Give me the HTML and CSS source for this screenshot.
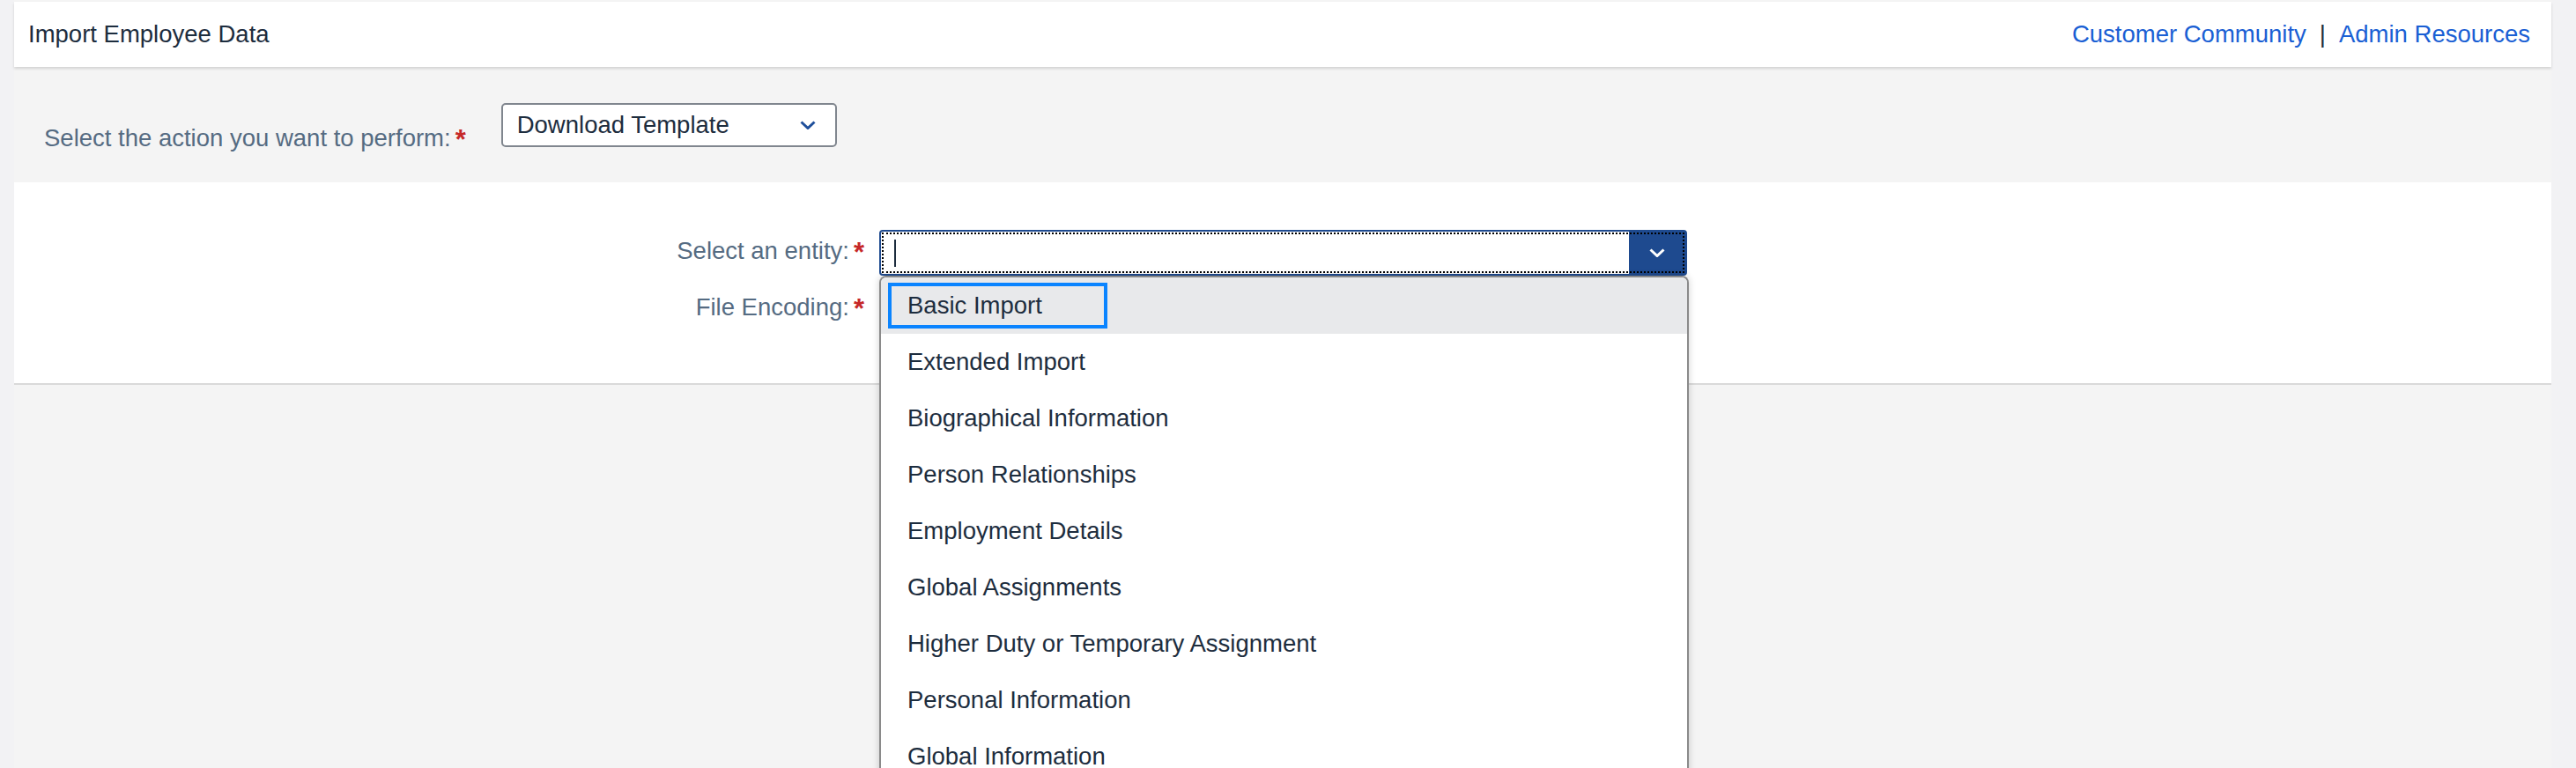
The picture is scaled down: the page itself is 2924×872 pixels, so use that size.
FILE: index.html
```html
<!DOCTYPE html>
<html lang="en">
<head>
  <meta charset="UTF-8">
  <meta name="viewport" content="width=device-width, initial-scale=1.0">
  <title>Import Employee Data</title>
  <link rel="stylesheet" href="styles.css">
</head>
<body>
  <div class="page">
    <header class="topbar">
      <h1 class="title">Import Employee Data</h1>
      <nav class="links">
        <a href="#community">Customer Community</a>
        <span class="sep">|</span>
        <a href="#resources">Admin Resources</a>
      </nav>
    </header>

    <div class="action">
      <label class="action-label">Select the action you want to perform:<span class="req">*</span></label>
      <div class="select">
        <span>Download Template</span>
        <svg class="chev" width="18" height="10" viewBox="0 0 18 10"><path d="M1.5 1.5 9 8.5 16.5 1.5" fill="none" stroke="#1f4f9b" stroke-width="3"/></svg>
      </div>
    </div>

    <section class="panel">
      <div class="form">
        <label class="flabel">Select an entity:<span class="req">*</span></label>
        <div class="combo">
          <div class="combo-input"><span class="caret"></span></div>
          <div class="combo-btn">
            <svg width="18" height="10" viewBox="0 0 18 10"><path d="M1.5 1.5 9 8.5 16.5 1.5" fill="none" stroke="#fff" stroke-width="3"/></svg>
          </div>
          <ul class="list">
            <li class="opt active"><span>Basic Import</span></li>
            <li class="opt"><span>Extended Import</span></li>
            <li class="opt"><span>Biographical Information</span></li>
            <li class="opt"><span>Person Relationships</span></li>
            <li class="opt"><span>Employment Details</span></li>
            <li class="opt"><span>Global Assignments</span></li>
            <li class="opt"><span>Higher Duty or Temporary Assignment</span></li>
            <li class="opt"><span>Personal Information</span></li>
            <li class="opt"><span>Global Information</span></li>
          </ul>
        </div>

        <label class="flabel">File Encoding:<span class="req">*</span></label>
        <div class="field"></div>
      </div>
    </section>
  </div>
</body>
</html>
```

FILE: styles.css
```css
html, body {
  margin: 0;
  height: 100%;
  overflow: hidden;
}
body {
  background: #f2f2f4;
  font-family: "Liberation Sans", Arial, sans-serif;
  font-size: 27.5px;
  color: #1d2d3e;
}
.page {
  margin-left: 16px;
  width: 2880px;
  height: 872px;
  padding-top: 2px;
  box-sizing: border-box;
  background: #f4f4f4;
}

/* top bar */
.topbar {
  position: relative;
  z-index: 1;
  display: flex;
  align-items: center;
  justify-content: space-between;
  height: 74px;
  padding: 0 24px 0 16px;
  background: #fff;
  box-shadow: 0 2px 3px rgba(0,0,0,.14);
}
.title {
  margin: 0;
  font-size: 27.5px;
  font-weight: normal;
  color: #1d2d3e;
}
.links {
  display: flex;
  align-items: center;
}
.links a {
  color: #1a5fd4;
  text-decoration: none;
}
.links .sep {
  margin: 0 15px;
  color: #1d2d3e;
}

.req {
  margin-left: 5px;
  color: #c62828;
  font-weight: bold;
  font-size: 31px;
  vertical-align: -3px;
}

/* action row */
.action {
  display: flex;
  align-items: flex-start;
  padding: 41px 0 0 34px;
}
.action-label {
  margin: 24px 40px 0 0;
  color: #556b82;
}
.select {
  display: flex;
  align-items: center;
  justify-content: space-between;
  width: 381px;
  height: 50px;
  box-sizing: border-box;
  padding: 0 22px 0 16px;
  border: 2px solid #80868e;
  border-radius: 5px;
  background: #fff;
}

/* entity panel */
.panel {
  margin-top: 30px;
  padding: 54px 0 58px;
  background: #fff;
  border-bottom: 2px solid #d9d9d9;
}
.form {
  display: grid;
  grid-template-columns: 966px 917px;
  column-gap: 16px;
  row-gap: 12px;
  align-items: center;
}
.flabel {
  text-align: right;
  padding-right: 1px;
  color: #556b82;
}
.combo {
  position: relative;
  display: flex;
  height: 52px;
  box-sizing: border-box;
  border: 2px solid #1e4a8f;
  border-radius: 4px;
  background: #fff;
}
.combo::after {
  content: '';
  position: absolute;
  top: 1px;
  left: 1px;
  right: 1px;
  bottom: 1px;
  border: 2px dotted #000;
  pointer-events: none;
}
.combo-input {
  flex: 1;
  display: flex;
  align-items: center;
  padding-left: 15px;
}
.caret {
  width: 2px;
  height: 31px;
  background: #1d2d3e;
}
.combo-btn {
  display: flex;
  align-items: center;
  justify-content: center;
  width: 64px;
  background: #1e4a8f;
}
.field {
  height: 52px;
  box-sizing: border-box;
  border: 2px solid #80868e;
  border-radius: 4px;
}

/* dropdown list */
.list {
  position: absolute;
  z-index: 5;
  top: calc(100% + 2px);
  left: -2px;
  width: 919px;
  box-sizing: border-box;
  margin: 0;
  padding: 0;
  list-style: none;
  background: #fff;
  border: 2px solid #8a8a8a;
  border-bottom: none;
  border-radius: 8px 8px 0 0;
  box-shadow: 0 0 8px rgba(0,0,0,.18);
  overflow: hidden;
}
.opt {
  display: flex;
  align-items: center;
  height: 64px;
  padding-left: 8px;
}
.opt > span {
  padding: 6px 70px 6px 18px;
  line-height: 32px;
  border: 4px solid transparent;
}
.opt.active {
  background: #e8e9eb;
}
.opt.active > span {
  border-color: #0a84ff;
}
```
